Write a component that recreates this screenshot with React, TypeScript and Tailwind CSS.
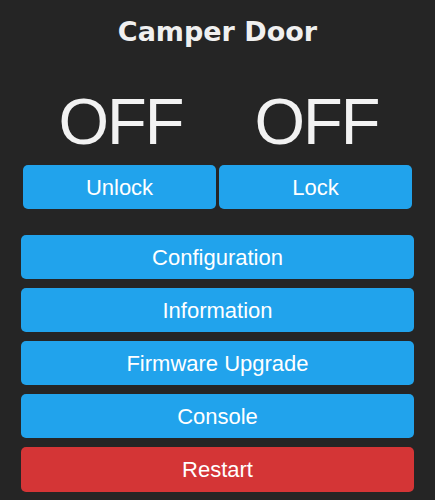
export default function App() {
  const menu = ["Configuration", "Information", "Firmware Upgrade", "Console"];

  return (
    <div className="h-[500px] w-[435px] overflow-hidden bg-[#252525] px-[21px] font-['Liberation_Sans',Arial,sans-serif] text-white">
      {/* title */}
      <h1 className="pt-[16px] text-center font-['DejaVu_Sans',sans-serif] text-[27px] font-bold leading-[32px] text-[#f0f0f0]">
        Camper Door
      </h1>

      {/* door state */}
      <div className="mt-[41px] grid grid-cols-2 gap-[3px] px-[2px]">
        <div className="pl-[2px] text-center text-[65px] leading-[66px] tracking-[-2px] text-[#f2f2f2]">OFF</div>
        <div className="pl-[2px] text-center text-[65px] leading-[66px] tracking-[-2px] text-[#f2f2f2]">OFF</div>
      </div>

      <div className="mt-[10px] grid grid-cols-2 gap-[3px] px-[2px]">
        <button className="h-[44px] rounded-[5px] bg-[#21a3ec] text-[22px]">Unlock</button>
        <button className="h-[44px] rounded-[5px] bg-[#21a3ec] text-[22px]">Lock</button>
      </div>

      {/* menu */}
      <div className="mt-[26px] flex flex-col gap-[9px]">
        {menu.map((m) => (
          <button key={m} className="h-[44px] rounded-[5px] bg-[#21a3ec] text-[22px]">
            {m}
          </button>
        ))}
        <button className="h-[45px] rounded-[5px] bg-[#d43536] text-[22px]">Restart</button>
      </div>
    </div>
  );
}
